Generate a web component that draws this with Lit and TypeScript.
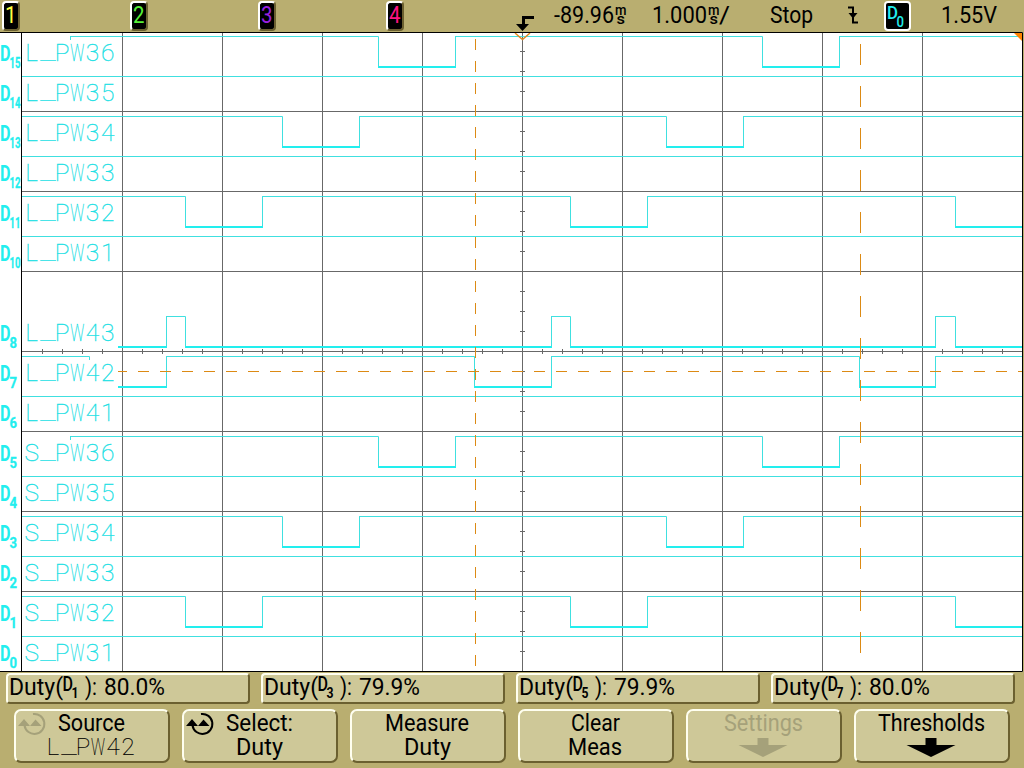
import { LitElement, html, svg, css } from "lit";
import { customElement } from "lit/decorators.js";

// Text drawn in a fixed advance width, giving the panel its condensed lettering.
const fit = (text: string, width: number, size = 24, cls = "") => html`
  <svg class="fit ${cls}" width=${width} height="24">
    <text x="0" y="20" font-size=${size} textLength=${width} lengthAdjust="spacingAndGlyphs">${text}</text>
  </svg>`;

const chars = (text: string, x: number, y: number, pitch: number) =>
  svg`<text class="stroke-font" text-anchor="middle">${[...text].map((c, i) => {
    const cx = x + i * pitch;
    if (c === "_")
      return svg`<tspan x=${cx + 1} y=${y - 1.5} textLength="15" lengthAdjust="spacingAndGlyphs">_</tspan>`;
    if (c === "W")
      return svg`<tspan x=${cx} y=${y} textLength="14" lengthAdjust="spacingAndGlyphs">W</tspan>`;
    return svg`<tspan x=${cx} y=${y}>${c}</tspan>`;
  })}</text>`;

// low: intervals in which the line is at logic zero
interface Channel { n: number; name: string; from: number; low: number[][]; }
const A = [[378, 455], [762, 839]];
const B = [[282, 359], [666, 743]];
const C = [[185, 262], [570, 647], [955, 1022]];
const channels: Channel[] = [
  { n: 15, name: "L_PW36", from: 70, low: A },
  { n: 14, name: "L_PW35", from: 22, low: [] },
  { n: 13, name: "L_PW34", from: 22, low: B },
  { n: 12, name: "L_PW33", from: 22, low: [] },
  { n: 11, name: "L_PW32", from: 22, low: C },
  { n: 10, name: "L_PW31", from: 22, low: [] },
  { n: 8, name: "L_PW43", from: 118, low: [[118, 166], [185, 551], [570, 935], [955, 1022]] },
  { n: 7, name: "L_PW42", from: 118, low: [[118, 166], [474, 551], [859, 935]] },
  { n: 6, name: "L_PW41", from: 22, low: [] },
  { n: 5, name: "S_PW36", from: 70, low: A },
  { n: 4, name: "S_PW35", from: 22, low: [] },
  { n: 3, name: "S_PW34", from: 22, low: B },
  { n: 2, name: "S_PW33", from: 22, low: [] },
  { n: 1, name: "S_PW32", from: 22, low: C },
  { n: 0, name: "S_PW31", from: 22, low: [] },
];

@customElement("scope-plot")
class ScopePlot extends LitElement {
  static styles = css`
    :host { display: block; height: 640px; background: #fff; }
    svg { display: block; }
    .grid { stroke: #686868; fill: none; }
    .frame { stroke: #000; fill: none; }
    .hi { stroke: #40e0e0; fill: none; }
    .lo { stroke: #22eeee; stroke-width: 2; fill: none; }
    .cursor { fill: #dc8a14; }
    .mark { stroke: #e08a20; stroke-width: 1.5; fill: none; }
    .stroke-font { font: 100 24.5px Roboto, sans-serif; fill: #20e0e4; stroke: #20e0e4; stroke-width: 0.35; }
    .d { font: 700 22px "Roboto", sans-serif; fill: #22eeee; }
    .s { font: 700 14px "Roboto", sans-serif; fill: #22eeee; stroke: #22eeee; stroke-width: 0.3; }
  `;
  trace(c: Channel) {
    const y = 636.5 - c.n * 40;
    let hi = "";
    let lo = "";
    let x = c.from;
    for (const [a, b] of c.low) {
      if (a > x) hi += `M${x} ${y}H${a + 0.5}`;
      if (a > 118) hi += `M${a + 0.5} ${y}V${y + 31.5}`;
      if (b < 1022) hi += `M${b + 0.5} ${y}V${y + 31.5}`;
      lo += `M${a} ${y + 30.5}H${b + 1}`;
      x = b;
    }
    if (x < 1022) hi += `M${x} ${y}H1022`;
    if (c.from === 70) hi += `M70.5 ${y}V${y + 3.5}`;
    if (c.n === 7) hi += `M22 ${y}H89.5V${y + 3.5}`;
    return svg`<path class="hi" d=${hi}/><path class="lo" d=${lo}/>`;
  }
  label(c: Channel) {
    const y = 661 - c.n * 40;
    const two = c.n > 9;
    return svg`
      <text class="d" x="0" y=${y} textLength="10.5" lengthAdjust="spacingAndGlyphs">D</text>
      <text class="s" x="9.5" y=${y + 6.5} textLength=${two ? 11 : 7.5} lengthAdjust="spacingAndGlyphs">${c.n}</text>
      ${chars(c.name, 31.7, y, 15.2)}`;
  }
  render() {
    let grid = "";
    for (let x = 122.5; x < 1022; x += 100) grid += `M${x} 33V671`;
    for (let y = 111.5; y < 671; y += 80) grid += `M22 ${y}H1022`;
    for (let x = 42.5; x < 1022; x += 20) grid += `M${x} 349V354`;
    for (let y = 51.5; y < 671; y += 20) grid += `M520 ${y}H525`;
    // cursor dashes, one pixel wide
    let cursor = "M118 371h9v1h-9z";
    for (let x = 138; x < 1022; x += 22) cursor += `M${x} 371h${Math.min(11, 1022 - x)}v1H${x}z`;
    for (let y = 39; y < 671; y += 22) cursor += `M475 ${y}h1v11h-1z`;
    for (let y = 44; y < 671; y += 42) cursor += `M860 ${y}h1v21h-1z`;
    return html`<svg width="1024" height="640" viewBox="0 32 1024 640">
      <rect x="1023" y="32" width="1" height="640" fill="#b9ae70"/>
      <path class="grid" d=${grid}/>
      ${channels.map((c) => this.trace(c))}
      ${channels.map((c) => this.label(c))}
      <path class="cursor" d=${cursor}/>
      <path class="mark" d="M515 33L522.5 39.5L530 33"/>
      <path d="M1014 33H1022V41Z" fill="#ff8400"/>
      <path class="frame" d="M0 32.5H1022.5V671.5H0M21.5 32V672"/>
    </svg>`;
  }
}

@customElement("app-root")
class AppRoot extends LitElement {
  static styles = css`
    :host {
      display: flex; flex-direction: column; width: 1024px; height: 768px; overflow: hidden;
      box-sizing: border-box; background: #b9ae70; color: #000; font-family: Roboto, sans-serif;
    }
    svg { display: block; overflow: visible; fill: currentColor; flex: none; }
    .top { height: 32px; display: flex; align-items: flex-start; padding: 1px 0 0 2px; box-sizing: border-box; flex: none; }
    .chs { display: flex; gap: 110px; width: 513px; }
    .ch {
      width: 18px; height: 30px; box-sizing: border-box; background: #000; border: 2px solid;
      border-color: #fff #6b6030 #6b6030 #fff; border-radius: 4px; display: flex; justify-content: center;
    }
    .dig { width: 27px; height: 30px; border: 2px solid #fff; border-radius: 4px; box-sizing: border-box; background: #000; color: #22eeee; margin-left: 26px; }
    .c1 { color: #ffff40; } .c2 { color: #58f038; } .c3 { color: #9a20e0; } .c4 { color: #ff1482; }
    .delay { margin: 2px 0 0 23px; } .unit { margin: 1px 0 0 1px; }
    .scale { margin: 2px 0 0 26px; } .slash { margin-top: 2px; }
    .stop { margin: 2px 0 0 40px; } .edge { margin-left: 35px; } .level { margin: 2px 0 0 30px; }
    .meas { display: flex; gap: 11px; padding: 1px 0 0 6px; flex: none; }
    .m {
      width: 244px; height: 31px; box-sizing: border-box; background: #cec898; border: 2px solid;
      border-color: #fffff0 #6b6030 #6b6030 #fffff0; border-radius: 4px; display: flex; padding: 0 0 0 1px;
    }
    .value { margin-left: 7px; }
    .keys { display: flex; gap: 12px; padding: 5px 0 0 14px; flex: none; }
    .key {
      width: 156px; height: 54px; box-sizing: border-box; background: #cec898; border: 2px solid;
      border-color: #fffff0 #6b6030 #6b6030 #fffff0; border-radius: 7px; display: grid;
      grid-template-columns: 1fr; grid-template-rows: 24px 24px; justify-items: center; padding-right: 2px;
    }
    .rowtop { display: flex; width: 100%; justify-content: center; align-items: flex-start; margin-top: -0.5px; }
    .knobbed { justify-content: flex-start; gap: 12px; }
    .knob { margin: 0 0 0 2px; }
    .off { color: #a5a17a; }
    .stroke-font { font: 100 24px Roboto, sans-serif; stroke: #000; stroke-width: 0.2; }
  `;

  knob(off: boolean) {
    return html`<svg class="knob ${off ? "off" : ""}" width="28" height="24">
      <path d="M15 3A10 10 0 1 1 6.5 14.5" fill="none" stroke="currentColor" stroke-width="2"/>
      <path d="M0 15L6 8L12 15Z M12 15L17.5 8.5L23.5 15Z"/></svg>`;
  }
  unit() {
    return html`<svg class="unit" width="11" height="24">
      <text x="0" y="12.5" font-size="15" font-weight="500" textLength="11.5" lengthAdjust="spacingAndGlyphs">m</text>
      <text x="1.5" y="21.5" font-size="15" font-weight="500" textLength="8.5" lengthAdjust="spacingAndGlyphs">s</text></svg>`;
  }
  measure(n: number, value: string) {
    return html`<div class="m">
      ${fit("Duty(", 54)}
      <svg width="22" height="24">
        <text x="-0.5" y="16" font-size="19.5" font-weight="500" textLength="10.5" lengthAdjust="spacingAndGlyphs">D</text>
        <text x="8.5" y="22.5" font-size="15" font-weight="700" textLength="7" lengthAdjust="spacingAndGlyphs">${n}</text>
      </svg>
      ${fit("):", 12)}<div class="value">${fit(value, 61)}</div>
    </div>`;
  }
  key(a: string, wa: number, b: string, wb: number) {
    return html`<div class="key"><div class="rowtop">${fit(a, wa, 23.5)}</div>${fit(b, wb, 23.5)}</div>`;
  }
  arrow() {
    return html`<svg width="50" height="22"><path d="M19.5 3H30.5V10H49.5L25 22L0.5 10H19.5Z"/></svg>`;
  }
  render() {
    return html`
      <div class="top">
        <div class="chs">
          ${["1", "2", "3", "4"].map((n) => html`<div class="ch c${n}">${fit(n, 11.5)}</div>`)}
        </div>
        <svg width="16" height="31"><path d="M7 15H19V18H10V23H14L7.5 30L1 23H7Z"/></svg>
        <div class="delay">${fit("-89.96", 60)}</div>${this.unit()}
        <div class="scale">${fit("1.000", 55)}</div>${this.unit()}
        <div class="slash">${fit("/", 11)}</div>
        <div class="stop">${fit("Stop", 43)}</div>
        <svg class="edge" width="10" height="30"><path d="M0 5.5H6V12H9.5L5 17.5L0.5 12H4V7.5H0Z M4 16H6V20.5H10V22.5H4Z"/></svg>
        <div class="dig"><svg width="23" height="26">
          <text x="1" y="15.5" font-size="19" font-weight="500" textLength="11" lengthAdjust="spacingAndGlyphs">D</text>
          <text x="10.5" y="24" font-size="14" font-weight="500" textLength="7.5" lengthAdjust="spacingAndGlyphs">0</text></svg></div>
        <div class="level">${fit("1.55V", 56)}</div>
      </div>
      <scope-plot></scope-plot>
      <div class="meas">
        ${this.measure(1, "80.0%")}${this.measure(3, "79.9%")}${this.measure(5, "79.9%")}${this.measure(7, "80.0%")}
      </div>
      <div class="keys">
        <div class="key"><div class="rowtop knobbed">${this.knob(true)}${fit("Source", 67, 23.5)}</div>
          <svg width="90" height="24">${chars("L_PW42", 7, 20, 15)}</svg></div>
        <div class="key"><div class="rowtop knobbed">${this.knob(false)}${fit("Select:", 67, 23.5)}</div>
          ${fit("Duty", 47, 23.5)}</div>
        ${this.key("Measure", 84, "Duty", 47)}
        ${this.key("Clear", 49, "Meas", 54)}
        <div class="key off"><div class="rowtop">${fit("Settings", 79, 23.5)}</div>${this.arrow()}</div>
        <div class="key"><div class="rowtop">${fit("Thresholds", 107, 23.5)}</div>${this.arrow()}</div>
      </div>`;
  }
}
